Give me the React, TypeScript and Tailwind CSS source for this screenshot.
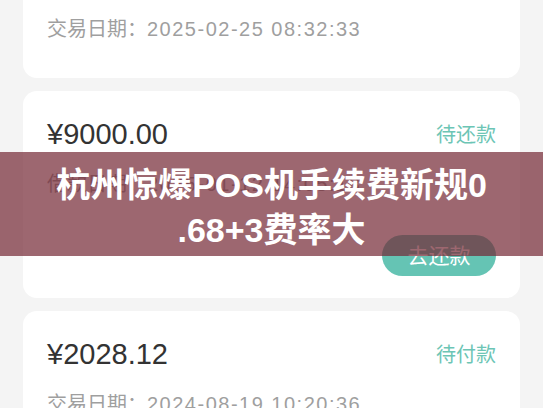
import React from "react";

interface Bill {
  amount: string;
  status: string;
  dateLabel: string;
  date: string;
  action?: string;
}

const bills: Bill[] = [
  { amount: "¥3500.00", status: "已还款", dateLabel: "交易日期", date: "2025-02-25 08:32:33" },
  { amount: "¥9000.00", status: "待还款", dateLabel: "借款日期", date: "2025-01-12 14:05:18", action: "去还款" },
  { amount: "¥2028.12", status: "待付款", dateLabel: "交易日期", date: "2024-08-19 10:20:36" },
];

const font = "font-['Liberation_Sans','Noto_Sans_CJK_SC',sans-serif]";

const BillCard: React.FC<{ bill: Bill }> = ({ bill }) => (
  <div className={`bg-white rounded-[14px] px-[24px] pt-[28px] ${bill.action ? "pb-[22px]" : "pb-[37px]"}`}>
    <div className="flex h-[32px] items-center justify-between">
      <span className="text-[29px] text-[#333333]">{bill.amount}</span>
      <span className="text-[20px] text-[#6cc5b5]">{bill.status}</span>
    </div>
    <div className="mt-[21px] h-[24px] flex items-center text-[20px] text-[#9f9f9f] whitespace-nowrap">
      <span>{bill.dateLabel}：</span>
      <span className="tracking-[1.5px]">{bill.date}</span>
    </div>
    {bill.action && (
      <div className="mt-[39px] flex justify-end">
        <button className="h-[41px] w-[114px] rounded-full bg-[#65c4b4] text-[21px] text-white">
          {bill.action}
        </button>
      </div>
    )}
  </div>
);

export default function App() {
  return (
    <div className={`relative w-[543px] h-[408px] overflow-hidden bg-[#f4f4f4] ${font}`}>
      <div className="-mt-[64px] px-[23px] flex flex-col gap-[13px]">
        {bills.map((b, i) => (
          <BillCard key={i} bill={b} />
        ))}
      </div>

      <div className="absolute left-0 right-0 top-[152px] h-[104px] bg-[rgba(115,39,51,0.7)] pt-[11px] text-center">
        <h1 className="text-[34px] leading-[45px] font-bold text-white">
          杭州惊爆POS机手续费新规0
          <br />
          .68+3费率大
        </h1>
      </div>
    </div>
  );
}
